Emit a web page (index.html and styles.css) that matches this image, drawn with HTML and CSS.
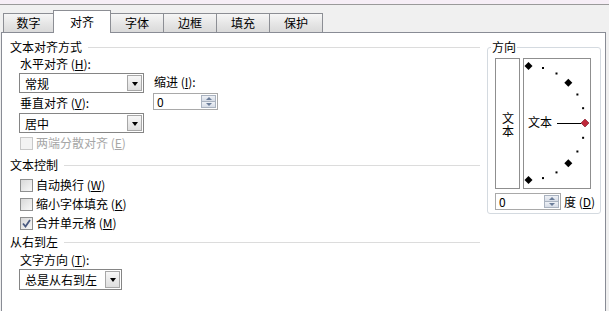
FILE: index.html
```html
<!DOCTYPE html>
<html lang="zh-CN">
<head>
    <meta charset="UTF-8">
    <title>设置单元格格式 - 对齐</title>
    <link rel="stylesheet" href="styles.css">
</head>
<body>
    <div class="topbar"></div>

    <div class="tabs">
        <div class="tab first">数字</div>
        <div class="tab active">对齐</div>
        <div class="tab">字体</div>
        <div class="tab">边框</div>
        <div class="tab">填充</div>
        <div class="tab">保护</div>
    </div>

    <div class="panel">
        <div class="left">
            <div class="heading">文本对齐方式</div>
            <div class="sub align-grid">
                <div class="align-col">
                    <div class="label">水平对齐 (<u>H</u>):</div>
                    <div class="combo wide"><span>常规</span><span class="drop"></span></div>
                    <div class="label gap">垂直对齐 (<u>V</u>):</div>
                    <div class="combo wide gap"><span>居中</span><span class="drop"></span></div>
                </div>
                <div class="indent-col">
                    <div class="label">缩进 (<u>I</u>):</div>
                    <div class="spin indent-spin">
                        <span>0</span>
                        <span class="spin-btns"><span class="up"></span><span class="down"></span></span>
                    </div>
                </div>
            </div>
            <div class="sub">
                <div class="check disabled"><span class="box"></span>两端分散对齐 (<u>E</u>)</div>
            </div>

            <div class="heading h-control">文本控制</div>
            <div class="sub checks">
                <div class="check"><span class="box"></span>自动换行 (<u>W</u>)</div>
                <div class="check"><span class="box"></span>缩小字体填充 (<u>K</u>)</div>
                <div class="check"><span class="box checked">
                    <svg width="11" height="11" viewBox="0 0 11 11"><polyline points="2,5.5 4.5,8.5 9,2" fill="none" stroke="#4a5a80" stroke-width="1.8"/></svg>
                </span>合并单元格 (<u>M</u>)</div>
            </div>

            <div class="heading h-rtl">从右到左</div>
            <div class="sub">
                <div class="label gap">文字方向 (<u>T</u>):</div>
                <div class="combo narrow"><span>总是从右到左</span><span class="drop"></span></div>
            </div>
        </div>

        <fieldset class="orient">
            <legend>方向</legend>
            <div class="orient-boxes">
                <div class="vtext"><span class="vtext-inner">文本</span></div>
                <div class="dial">
                    <svg width="66" height="129" viewBox="0 0 66 129">
                        <polygon points="4.5,3 8.5,7 4.5,11 0.5,7" fill="#000"/>
                        <rect x="18" y="8" width="2" height="2" fill="#000"/>
                        <rect x="31.5" y="13.5" width="2" height="2" fill="#000"/>
                        <polygon points="44.3,19.7 48.3,23.7 44.3,27.7 40.3,23.7" fill="#000"/>
                        <rect x="52.4" y="34.5" width="2" height="2" fill="#000"/>
                        <rect x="58.1" y="48.2" width="2" height="2" fill="#000"/>
                        <text x="4" y="68" font-size="12" font-family="Noto Sans CJK SC, sans-serif">文本</text>
                        <line x1="33" y1="64.5" x2="57" y2="64.5" stroke="#000" stroke-width="1"/>
                        <polygon points="61,60 65,64 61,68 57,64" fill="#c0283a" stroke="#7a1020" stroke-width="0.6"/>
                        <rect x="58.1" y="77.8" width="2" height="2" fill="#000"/>
                        <rect x="52.4" y="91.5" width="2" height="2" fill="#000"/>
                        <polygon points="44.3,100.3 48.3,104.3 44.3,108.3 40.3,104.3" fill="#000"/>
                        <rect x="31.5" y="112.4" width="2" height="2" fill="#000"/>
                        <rect x="18" y="118.1" width="2" height="2" fill="#000"/>
                        <polygon points="4.5,117 8.5,121 4.5,125 0.5,121" fill="#000"/>
                    </svg>
                </div>
            </div>
            <div class="degree-row">
                <div class="spin degree-spin">
                    <span>0</span>
                    <span class="spin-btns"><span class="up"></span><span class="down"></span></span>
                </div>
                <span class="degree-label">度 (<u>D</u>)</span>
            </div>
        </fieldset>
    </div>
</body>
</html>
```

FILE: styles.css
```css
body {
    margin: 0;
    background-color: #f0f0f0;
    font-family: "Noto Sans CJK SC", "Noto Sans", sans-serif;
    font-size: 12px;
    color: #000;
    overflow: hidden;
}
u {
    text-decoration: underline;
    text-underline-offset: 1px;
}
.topbar {
    height: 4px;
    background-color: #f6eef6;
    border-bottom: 1px solid #9a9a9a;
}
.tabs {
    display: flex;
    align-items: flex-end;
    height: 27px;
    padding-left: 3px;
}
.tab {
    box-sizing: border-box;
    width: 54px;
    height: 19px;
    line-height: 17px;
    margin-left: -1px;
    text-align: center;
    border: 1px solid #8c8e94;
    border-bottom: none;
    background: linear-gradient(#f6f6f6, #e4e4e4 60%, #dadada);
}
.tab.first {
    margin-left: 0;
    width: 51px;
}
.tab.active {
    position: relative;
    z-index: 1;
    width: 58px;
    height: 23px;
    line-height: 22px;
    margin-bottom: -1px;
    background: #fff;
}
.panel {
    box-sizing: border-box;
    display: flex;
    width: 605px;
    height: 290px;
    margin-left: 1px;
    border: 1px solid #898c95;
    background-color: #fff;
}
.left {
    box-sizing: border-box;
    width: 485px;
    padding: 6px 7px 0 8px;
}
.heading {
    display: flex;
    align-items: center;
    height: 16px;
    line-height: 16px;
}
.heading::after {
    content: "";
    flex: 1;
    margin-left: 6px;
    border-top: 1px solid #dcdcdc;
}
.h-control {
    margin-top: 6px;
}
.h-rtl {
    margin-top: 3px;
}
.sub {
    margin-left: 9px;
}
.label {
    height: 16px;
    line-height: 16px;
    padding-left: 1px;
    margin-top: 1px;
}
.label.gap {
    margin-top: 2px;
}
.align-grid {
    display: flex;
}
.indent-col {
    margin-left: 9px;
    padding-top: 18px;
}
.combo {
    box-sizing: border-box;
    display: flex;
    align-items: center;
    justify-content: space-between;
    height: 20px;
    margin-top: 1px;
    padding: 1px 1px 1px 5px;
    border: 1px solid #858585;
    background: #fff;
}
.combo.gap {
    margin-top: 2px;
}
.combo.wide {
    width: 125px;
}
.combo.narrow {
    width: 103px;
    height: 21px;
    margin-top: 1px;
}
.drop {
    box-sizing: border-box;
    display: flex;
    align-items: center;
    justify-content: center;
    width: 15px;
    height: 100%;
    border: 1px solid #a7a7a7;
    background: linear-gradient(#f7f7f7, #dedede);
}
.drop::after {
    content: "";
    margin-top: 1px;
    border-left: 3.5px solid transparent;
    border-right: 3.5px solid transparent;
    border-top: 4px solid #000;
}
.spin {
    box-sizing: border-box;
    display: flex;
    align-items: center;
    justify-content: space-between;
    height: 17px;
    padding: 1px 1px 1px 3px;
    border: 1px solid #a9a9a9;
    background: #fff;
}
.indent-spin {
    width: 65px;
    margin-top: 3px;
}
.degree-spin {
    width: 66px;
}
.spin-btns {
    display: flex;
    flex-direction: column;
    width: 15px;
    height: 100%;
}
.spin-btns span {
    box-sizing: border-box;
    flex: 1;
    display: flex;
    align-items: center;
    justify-content: center;
    border: 1px solid #aab3c0;
    background: linear-gradient(#eef1f6, #d6dce6);
}
.spin-btns .down {
    border-top: none;
}
.spin-btns .up::after {
    content: "";
    border-left: 3px solid transparent;
    border-right: 3px solid transparent;
    border-bottom: 3px solid #6b7d99;
}
.spin-btns .down::after {
    content: "";
    border-left: 3px solid transparent;
    border-right: 3px solid transparent;
    border-top: 3px solid #6b7d99;
}
.check {
    display: flex;
    align-items: center;
    height: 16px;
    line-height: 16px;
    margin-top: 2px;
}
.checks .check {
    margin-top: 3px;
}
.checks .check:first-child {
    margin-top: 4px;
}
.box {
    box-sizing: border-box;
    display: flex;
    align-items: center;
    justify-content: center;
    width: 13px;
    height: 13px;
    margin: 0 3px 0 1px;
    border: 1px solid #8e8f8f;
    background: linear-gradient(135deg, #d8d8d8, #f8f8f8);
}
.check.disabled {
    color: #a6a6a6;
}
.check.disabled .box {
    border-color: #c8c8c8;
    background: #f3f3f3;
}
.orient {
    box-sizing: border-box;
    width: 114px;
    height: 174px;
    min-inline-size: 0;
    margin: 7px 0 0 0;
    padding: 4px 0 0 7px;
    border: 1px solid #d4dae0;
    border-radius: 3px;
}
.orient legend {
    margin-left: -4px;
    padding: 0 1px;
    line-height: 14px;
}
.orient-boxes {
    display: flex;
    gap: 3px;
}
.vtext {
    box-sizing: border-box;
    display: flex;
    align-items: center;
    justify-content: center;
    width: 25px;
    height: 131px;
    padding-top: 2px;
    border: 1px solid #8f8f8f;
}
.vtext-inner {
    writing-mode: vertical-rl;
    text-orientation: upright;
    letter-spacing: 1px;
    line-height: 14px;
}
.dial {
    box-sizing: border-box;
    width: 68px;
    height: 131px;
    border: 1px solid #8f8f8f;
}
.dial svg {
    display: block;
}
.degree-row {
    display: flex;
    align-items: center;
    margin-top: 4px;
}
.degree-label {
    margin-left: 3px;
}
```
